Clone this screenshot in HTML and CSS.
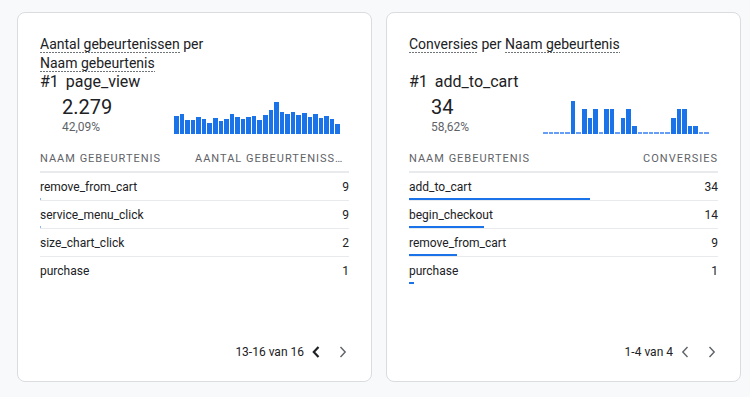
FILE: index.html
```html
<!DOCTYPE html>
<html lang="nl">
<head>
<meta charset="utf-8">
<title>Gebeurtenissen</title>
<link rel="stylesheet" href="styles.css">
</head>
<body>
<main class="board">
  <section class="card">
    <h2 class="title"><span class="dotted">Aantal gebeurtenissen</span> per<br><span class="dotted">Naam gebeurtenis</span></h2>
    <div class="rank"><span class="rank-no">#1</span><span>page_view</span></div>
    <div class="summary">
      <div class="figure">
        <div class="value">2.279</div>
        <div class="pct">42,09%</div>
      </div>
      <div class="spark">
        <i class="b" style="height:18px"></i><i class="b" style="height:20px"></i><i class="b" style="height:14px"></i><i class="b" style="height:14px"></i><i class="b" style="height:17px"></i><i class="b" style="height:15px"></i><i class="b" style="height:11px"></i><i class="b" style="height:16px"></i><i class="b" style="height:13px"></i><i class="b" style="height:15px"></i><i class="b" style="height:20px"></i><i class="b" style="height:17px"></i><i class="b" style="height:15px"></i><i class="b" style="height:17px"></i><i class="b" style="height:18px"></i><i class="b" style="height:14px"></i><i class="b" style="height:19px"></i><i class="b" style="height:24px"></i><i class="b" style="height:32px"></i><i class="b" style="height:22px"></i><i class="b" style="height:20px"></i><i class="b" style="height:22px"></i><i class="b" style="height:19px"></i><i class="b" style="height:21px"></i><i class="b" style="height:17px"></i><i class="b" style="height:20px"></i><i class="b" style="height:16px"></i><i class="b" style="height:18px"></i><i class="b" style="height:15px"></i><i class="b" style="height:10px"></i>
      </div>
    </div>
    <div class="table">
      <div class="thead"><span class="th">Naam gebeurtenis</span><span class="th th-num">Aantal gebeurtenissen</span></div>
      <div class="row"><div class="line"><span>remove_from_cart</span><span>9</span></div><div class="bar faint" style="width:0.6px"></div></div>
      <div class="row"><div class="line"><span>service_menu_click</span><span>9</span></div><div class="bar faint" style="width:0.6px"></div></div>
      <div class="row"><div class="line"><span>size_chart_click</span><span>2</span></div><div class="bar" style="width:0px"></div></div>
      <div class="row last"><div class="line"><span>purchase</span><span>1</span></div><div class="bar" style="width:0px"></div></div>
    </div>
    <div class="pager">
      <span>13-16 van 16</span>
      <button class="nav active" aria-label="Vorige"><svg viewBox="0 0 8 12" width="8" height="12"><path d="M6.5 1 L1.8 6 L6.5 11"/></svg></button>
      <button class="nav" aria-label="Volgende"><svg viewBox="0 0 8 12" width="8" height="12"><path d="M1.5 1 L6.2 6 L1.5 11"/></svg></button>
    </div>
  </section>

  <section class="card">
    <h2 class="title"><span class="dotted">Conversies</span> per <span class="dotted">Naam gebeurtenis</span></h2>
    <div class="rank"><span class="rank-no">#1</span><span>add_to_cart</span></div>
    <div class="summary">
      <div class="figure">
        <div class="value">34</div>
        <div class="pct">58,62%</div>
      </div>
      <div class="spark">
        <i class="z"></i><i class="z"></i><i class="z"></i><i class="z"></i><i class="z"></i><i class="b" style="height:33px"></i><i class="z"></i><i class="b" style="height:25px"></i><i class="b" style="height:16px"></i><i class="b" style="height:25px"></i><i class="z"></i><i class="b" style="height:25px"></i><i class="b" style="height:25px"></i><i class="z"></i><i class="b" style="height:16px"></i><i class="b" style="height:25px"></i><i class="b" style="height:8px"></i><i class="z"></i><i class="z"></i><i class="z"></i><i class="z"></i><i class="z"></i><i class="z"></i><i class="b" style="height:16px"></i><i class="b" style="height:25px"></i><i class="b" style="height:25px"></i><i class="b" style="height:8px"></i><i class="b" style="height:8px"></i><i class="z"></i><i class="z"></i>
      </div>
    </div>
    <div class="table">
      <div class="thead"><span class="th">Naam gebeurtenis</span><span class="th th-num">Conversies</span></div>
      <div class="row"><div class="line"><span>add_to_cart</span><span>34</span></div><div class="bar" style="width:58.62%"></div></div>
      <div class="row"><div class="line"><span>begin_checkout</span><span>14</span></div><div class="bar" style="width:24.14%"></div></div>
      <div class="row"><div class="line"><span>remove_from_cart</span><span>9</span></div><div class="bar" style="width:15.52%"></div></div>
      <div class="row last"><div class="line"><span>purchase</span><span>1</span></div><div class="bar" style="width:1.72%"></div></div>
    </div>
    <div class="pager">
      <span>1-4 van 4</span>
      <button class="nav" aria-label="Vorige"><svg viewBox="0 0 8 12" width="8" height="12"><path d="M6.5 1 L1.8 6 L6.5 11"/></svg></button>
      <button class="nav" aria-label="Volgende"><svg viewBox="0 0 8 12" width="8" height="12"><path d="M1.5 1 L6.2 6 L1.5 11"/></svg></button>
    </div>
  </section>
</main>
</body>
</html>
```
FILE: styles.css
```css
* { box-sizing: border-box; }

html, body {
  margin: 0;
  padding: 0;
  background: #f8f9fa;
  font-family: Roboto, "Liberation Sans", Arial, sans-serif;
  color: #202124;
}

.board {
  display: flex;
  gap: 14px;
  padding: 12px 9px 0 17px;
}

.card {
  flex: 1 1 0;
  height: 370px;
  background: #fff;
  border: 1px solid #dadce0;
  border-radius: 8px;
  padding: 22px 22px 21px;
  display: flex;
  flex-direction: column;
}

.title {
  margin: 0;
  height: 38px;
  font-size: 14px;
  line-height: 19px;
  font-weight: 400;
  color: #202124;
}

.dotted {
  background-image: linear-gradient(to right, #70757a 0 2px, transparent 2px 3px);
  background-size: 3px 1px;
  background-repeat: repeat-x;
  background-position: 0 100%;
  padding-bottom: 1px;
}

.rank {
  display: flex;
  gap: 7px;
  font-size: 16px;
  line-height: 18px;
}

.summary {
  display: grid;
  grid-template-columns: 134px 166px;
  align-items: end;
  margin-top: 5px;
}

.figure {
  padding-left: 22px;
}

.value {
  font-size: 20px;
  line-height: 23px;
}

.pct {
  font-size: 12px;
  line-height: 16px;
  color: #5f6368;
}

.spark {
  height: 34px;
  display: flex;
  align-items: flex-end;
  gap: 1px;
  margin-bottom: 1px;
}

.spark .b,
.spark .z {
  flex: 1 1 0;
  display: block;
  background: #1a73e8;
}

.spark .z {
  height: 2px;
  background: #669df6;
}

.table {
  margin-top: 16px;
}

.thead {
  display: flex;
  justify-content: space-between;
  gap: 20px;
  padding-bottom: 4px;
  border-bottom: 2px solid #e8eaed;
  font-size: 11px;
  line-height: 16px;
  letter-spacing: 1px;
  text-transform: uppercase;
  color: #5f6368;
}

.th-num {
  max-width: 154px;
  white-space: nowrap;
  overflow: hidden;
  text-overflow: ellipsis;
}

.row {
  height: 28px;
  padding-top: 3px;
  border-bottom: 1px solid #e8eaed;
  display: flex;
  flex-direction: column;
}

.row.last {
  border-bottom: 0;
}

.line {
  height: 22px;
  display: flex;
  align-items: center;
  justify-content: space-between;
  font-size: 12px;
}

.bar {
  height: 2px;
  background: #1a73e8;
}

.bar.faint {
  background: #8ab4f8;
}

.pager {
  margin-top: auto;
  display: flex;
  justify-content: flex-end;
  align-items: center;
  font-size: 12px;
  line-height: 16px;
  padding-right: 2px;
}

.nav {
  border: 0;
  background: none;
  padding: 0;
  margin-left: 8px;
  width: 8px;
  height: 12px;
  display: flex;
}

.nav + .nav {
  margin-left: 19px;
}

.nav svg path {
  fill: none;
  stroke: #5f6368;
  stroke-width: 1.4;
}

.nav.active svg path {
  stroke: #202124;
  stroke-width: 2.2;
}
```
